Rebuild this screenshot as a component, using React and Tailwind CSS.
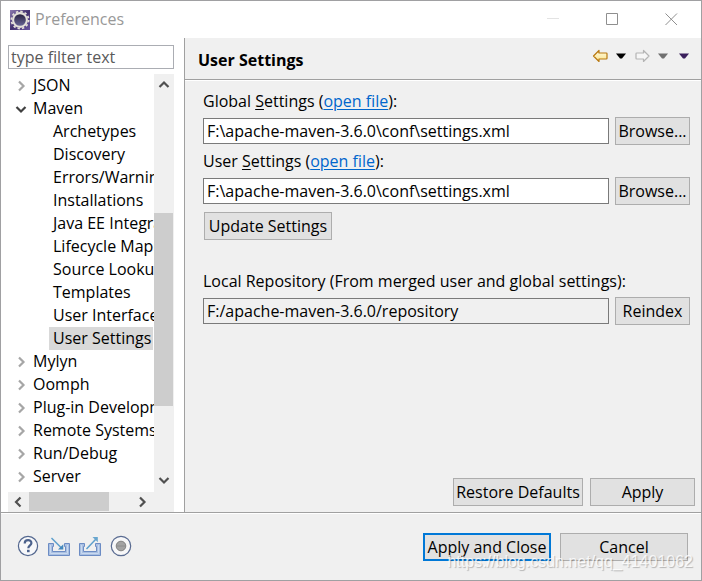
import { useState } from "react";

const TREE = [
  { label: "JSON", state: "closed" },
  { label: "Maven", state: "open" },
  { label: "Archetypes" },
  { label: "Discovery" },
  { label: "Errors/Warnings" },
  { label: "Installations" },
  { label: "Java EE Integration" },
  { label: "Lifecycle Mappings" },
  { label: "Source Lookup" },
  { label: "Templates" },
  { label: "User Interface" },
  { label: "User Settings", selected: true },
  { label: "Mylyn", state: "closed" },
  { label: "Oomph", state: "closed" },
  { label: "Plug-in Development", state: "closed" },
  { label: "Remote Systems", state: "closed" },
  { label: "Run/Debug", state: "closed" },
  { label: "Server", state: "closed" },
];

const CHEVRONS = {
  right: "M4 1.5 8.5 6 4 10.5",
  left: "M7.5 1.5 3 6 7.5 10.5",
  down: "M1.5 4 6 8.5 10.5 4",
  up: "M1.5 9 6 4.5 10.5 9",
};

function Chevron({ dir, className }) {
  return (
    <svg viewBox="0 0 12 12" className={`size-3 shrink-0 ${className}`} fill="none" stroke="currentColor" strokeWidth="2.2" aria-hidden="true">
      <path d={CHEVRONS[dir]} />
    </svg>
  );
}

function TreeItem({ item }) {
  if (!item.state) {
    return (
      <li className="flex h-[23px] pl-[41px]">
        <button type="button" className={`h-[23px] pl-1 whitespace-nowrap ${item.selected ? "w-[104px] overflow-hidden bg-[#d9d9d9] text-left" : ""}`}>
          {item.label}
        </button>
      </li>
    );
  }
  const open = item.state === "open";
  return (
    <li className="flex h-[23px] pl-[7px]">
      <button type="button" aria-expanded={open} className="flex h-[23px] items-center gap-[6px] whitespace-nowrap">
        <Chevron dir={open ? "down" : "right"} className={open ? "text-[#404040]" : "text-[#a6a6a6]"} />
        <span>{item.label}</span>
      </button>
    </li>
  );
}

function Button({ children, className = "", primary = false }) {
  return (
    <button
      type="button"
      className={`h-7 shrink-0 whitespace-nowrap bg-[#e1e1e1] text-center leading-6 ${primary ? "border-2 border-[#0078d7]" : "border border-[#adadad]"} ${className}`}
    >
      {children}
    </button>
  );
}

function PathRow({ id, value, readOnly, action }) {
  const [text, setText] = useState(value);
  return (
    <div className="flex items-center gap-[6px]">
      <input
        id={id}
        type="text"
        value={text}
        readOnly={readOnly}
        onChange={(e) => setText(e.target.value)}
        className={`h-[26px] min-w-0 flex-1 border border-[#7a7a7a] px-[3px] outline-none ${readOnly ? "bg-[#f0f0f0]" : "bg-white"}`}
      />
      <Button className="w-[75px]">{action}</Button>
    </div>
  );
}

function SettingsLabel({ id, prefix }) {
  return (
    <div className="h-8 leading-8">
      <label htmlFor={id}>
        {prefix} <span className="underline underline-offset-2">S</span>ettings
      </label>{" "}
      (
      <a href="#open" className="text-[#0066cc] underline underline-offset-2">
        open file
      </a>
      ):
    </div>
  );
}

function Triangle({ className }) {
  return (
    <svg viewBox="0 0 10 6" className={`h-[6px] w-[10px] ${className}`} fill="currentColor" aria-hidden="true">
      <path d="M0 .5h10L6 5.5H4z" />
    </svg>
  );
}

function Arrow({ forward = false }) {
  return (
    <svg viewBox="0 0 16 14" className="h-[14px] w-4" aria-hidden="true">
      <defs>
        <linearGradient id="gold" x1="0" y1="0" x2="0" y2="1">
          <stop offset="0" stopColor="#fffbe0" />
          <stop offset="1" stopColor="#fbe38c" />
        </linearGradient>
      </defs>
      <path
        d={forward ? "M15 7 9.5 1.5V4H2.7Q2 4 2 4.7V9.3Q2 10 2.7 10H9.5V12.5Z" : "M1.5 7 7 1.5V4H14.3Q15 4 15 4.7V9.3Q15 10 14.3 10H7V12.5Z"}
        fill={forward ? "#f6f6f6" : "url(#gold)"}
        stroke={forward ? "#b4b4b4" : "#b8780f"}
        strokeWidth="1.2"
        strokeLinejoin="round"
      />
    </svg>
  );
}

function AppIcon() {
  return (
    <svg viewBox="0 0 20 20" className="size-5" aria-hidden="true">
      <defs>
        <linearGradient id="appBg" x1="0" y1="0" x2="1" y2="1">
          <stop offset="0" stopColor="#8d7bb0" />
          <stop offset="0.5" stopColor="#43316f" />
          <stop offset="1" stopColor="#6a55a0" />
        </linearGradient>
        <linearGradient id="appCore" x1="0" y1="0" x2="0" y2="1">
          <stop offset="0" stopColor="#231c3a" />
          <stop offset="1" stopColor="#6e6b9d" />
        </linearGradient>
      </defs>
      <rect width="20" height="20" fill="url(#appBg)" />
      <circle cx="10" cy="10" r="8.6" fill="none" stroke="#e4e0da" strokeWidth="1.8" strokeDasharray="2.4 2.103" />
      <circle cx="10" cy="10" r="6.9" fill="url(#appCore)" stroke="#e4e0da" strokeWidth="2.1" />
    </svg>
  );
}

function HelpIcon() {
  return (
    <svg viewBox="0 0 22 22" className="size-[22px]" fill="none" aria-hidden="true">
      <circle cx="11" cy="11" r="9.6" fill="#f7f8fa" stroke="#53678f" strokeWidth="1.2" />
      <path d="M7.7 8.4C7.7 4 14.6 4.2 14.4 8.1C14.3 10.4 11.4 10.4 11.3 13.2" stroke="#4c628d" strokeWidth="2.2" />
      <rect x="10" y="14.8" width="2.6" height="2.4" fill="#4c628d" />
    </svg>
  );
}

function TrayIcon({ out = false }) {
  return (
    <svg viewBox="0 0 22 22" className="size-[22px]" fill="none" aria-hidden="true">
      <path d="M.5 8.5H5.5V11.5H4.5V16.5H17.5V11.5H16.5V8.5H21.5V20.5H.5Z" fill="#a9c0e2" stroke="#6c8cc4" />
      <path d="M2.5 10V18.5H19.5V10" stroke="#c9d9f0" />
      {out ? (
        <g stroke="#5d9fcc" strokeWidth="1.5">
          <path d="M7.5 14 17 4" />
          <path d="M13.5 2H18.8V7.3Z" fill="#68a6ce" stroke="none" />
        </g>
      ) : (
        <g stroke="#5d9fcc" strokeWidth="1.5">
          <path d="M3.5 3 13.5 13" />
          <path d="M15.3 9.2V14.5H10Z" fill="#4488bd" stroke="none" />
        </g>
      )}
    </svg>
  );
}

function RecordIcon() {
  return (
    <svg viewBox="0 0 22 22" className="size-[22px]" aria-hidden="true">
      <circle cx="11" cy="11" r="9.7" fill="#f7f7f8" stroke="#596b91" strokeWidth="1.2" />
      <circle cx="11" cy="11" r="4.8" fill="#a3a3a3" stroke="#828282" />
      <path d="M7 11H15" stroke="#8c8c8c" />
    </svg>
  );
}

export default function App() {
  const [filter, setFilter] = useState("");
  return (
    <div className="relative flex h-screen flex-col overflow-hidden border border-[#a0a0a2] bg-[#f0f0f0] font-['Open_Sans','Noto_Sans',sans-serif] text-base leading-[23px] text-black">
      <header className="flex h-[37px] shrink-0 items-center bg-white pr-[23px] pl-[9px]">
        <AppIcon />
        <h1 className="flex-1 pl-[5px] text-[#999999]">Preferences</h1>
        <div className="flex items-center gap-[46px]">
          <button type="button" aria-label="Minimize">
            <svg viewBox="0 0 13 13" className="size-[13px]" stroke="#e3e3e3"><path d="M0 5.5H12" /></svg>
          </button>
          <button type="button" aria-label="Maximize">
            <svg viewBox="0 0 13 13" className="size-[13px]" fill="none" stroke="#8f8f8f"><path d="M.5.5H11.5V11.5H.5Z" /></svg>
          </button>
          <button type="button" aria-label="Close">
            <svg viewBox="0 0 13 13" className="size-[13px]" stroke="#8f8f8f"><path d="M.5.5 12 12M12 .5.5 12" /></svg>
          </button>
        </div>
      </header>

      <div className="flex min-h-0 flex-1">
        <aside className="flex w-[184px] shrink-0 flex-col border-r border-[#a0a0a0] bg-white pt-[7px] pr-[10px] pl-[7px]">
          <input
            type="text"
            aria-label="Filter"
            placeholder="type filter text"
            value={filter}
            onChange={(e) => setFilter(e.target.value)}
            className="h-6 w-full shrink-0 border border-[#abadb3] px-[2px] outline-none placeholder:text-[#5a5a5a]"
          />
          <div className="flex min-h-0 flex-1 pt-[5px]">
            <ul className="min-w-0 flex-1 overflow-hidden">
              {TREE.map((item) => (
                <TreeItem key={item.label} item={item} />
              ))}
            </ul>
            <div className="flex w-5 shrink-0 flex-col items-center bg-[#f0f0f0]">
              <button type="button" aria-label="Scroll up" className="flex h-5 shrink-0 items-center">
                <Chevron dir="up" className="text-[#505050]" />
              </button>
              <div className="flex w-full flex-1 flex-col pr-px">
                <div className="grow-[119]" />
                <div className="grow-[193] bg-[#cdcdcd]" />
                <div className="grow-[62]" />
              </div>
              <button type="button" aria-label="Scroll down" className="flex h-6 shrink-0 items-center">
                <Chevron dir="down" className="text-[#505050]" />
              </button>
            </div>
          </div>
          <div className="flex h-5 shrink-0 items-center bg-[#f0f0f0] pr-5">
            <button type="button" aria-label="Scroll left" className="flex w-[21px] justify-center">
              <Chevron dir="left" className="text-[#505050]" />
            </button>
            <div className="flex h-full flex-1 pb-px">
              <div className="w-20 bg-[#cdcdcd]" />
            </div>
            <button type="button" aria-label="Scroll right" className="flex w-6 justify-center">
              <Chevron dir="right" className="text-[#505050]" />
            </button>
          </div>
        </aside>

        <main className="flex min-w-0 flex-1 flex-col">
          <div className="flex h-[42px] shrink-0 items-center border-b border-[#a0a0a0] pr-3 pl-[13px]">
            <h2 className="flex-1 pt-1 font-bold">User Settings</h2>
            <div className="flex items-center pb-[5px]">
              <button type="button" aria-label="Back"><Arrow /></button>
              <button type="button" aria-label="Back history" className="pl-2"><Triangle className="text-black" /></button>
              <button type="button" aria-label="Forward" disabled className="pl-2"><Arrow forward /></button>
              <button type="button" aria-label="Forward history" disabled className="pl-2"><Triangle className="text-[#707070]" /></button>
              <button type="button" aria-label="View menu" className="pl-[11px]"><Triangle className="text-[#3a1f5c]" /></button>
            </div>
          </div>

          <form className="flex flex-1 flex-col border-t border-white pt-1 pr-[11px] pl-[18px]" onSubmit={(e) => e.preventDefault()}>
            <SettingsLabel id="global" prefix="Global" />
            <PathRow id="global" value="F:\apache-maven-3.6.0\conf\settings.xml" action="Browse..." />
            <SettingsLabel id="user" prefix="User" />
            <PathRow id="user" value="F:\apache-maven-3.6.0\conf\settings.xml" action="Browse..." />
            <div className="pt-[7px] pb-[25px] pl-px">
              <Button className="w-32">Update Settings</Button>
            </div>
            <label htmlFor="repo" className="h-8 leading-8">
              Local Repository (From merged user and global settings):
            </label>
            <PathRow id="repo" value="F:/apache-maven-3.6.0/repository" readOnly action="Reindex" />
          </form>

          <div className="flex justify-end gap-[7px] pr-[6px] pb-[6px]">
            <Button className="w-[130px]">Restore Defaults</Button>
            <Button className="w-[105px]">Apply</Button>
          </div>
        </main>
      </div>

      <footer className="flex h-[68px] shrink-0 items-center border-t border-[#a0a0a0] pr-[13px] pl-4 shadow-[inset_0_1px_0_white]">
        <div className="flex flex-1 gap-[9px] pb-[2px]">
          <button type="button" aria-label="Help"><HelpIcon /></button>
          <button type="button" aria-label="Import preferences"><TrayIcon /></button>
          <button type="button" aria-label="Export preferences"><TrayIcon out /></button>
          <button type="button" aria-label="Record preferences"><RecordIcon /></button>
        </div>
        <div className="flex gap-[9px]">
          <Button primary className="w-32">Apply and Close</Button>
          <Button className="w-32">Cancel</Button>
        </div>
      </footer>
      <p className="pointer-events-none absolute right-2 bottom-2 font-['Liberation_Sans',sans-serif] text-base leading-5 text-white/80 [text-shadow:1px_1px_1px_rgba(0,0,0,0.25)]">
        https://blog.csdn.net/qq_41401062
      </p>
    </div>
  );
}
